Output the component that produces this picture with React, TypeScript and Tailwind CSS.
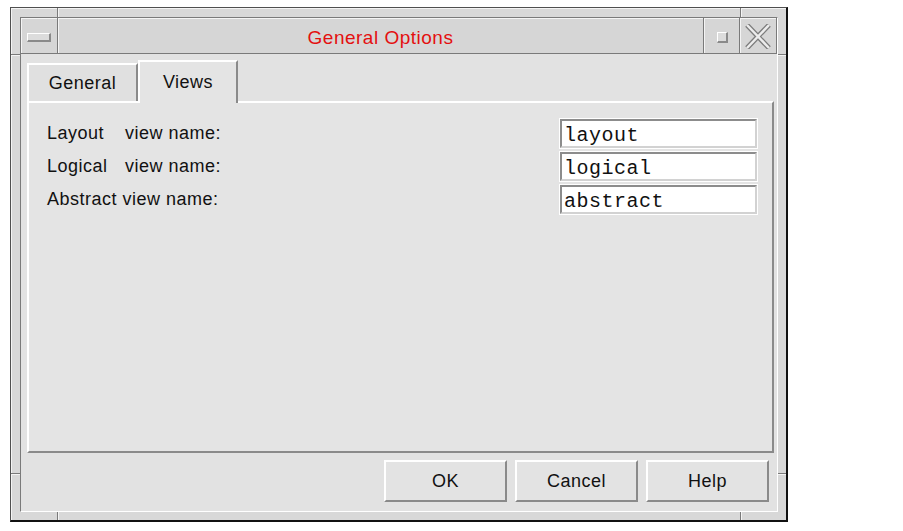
import React from "react";

function Field({ value }: { value: string }) {
  return (
    <div className="h-[31px] w-[199px] border border-white">
      <div className="flex h-full w-full items-center border-t-2 border-l-2 border-b-2 border-r-2 border-t-[#8c8c8c] border-l-[#8c8c8c] border-b-[#d2d2d2] border-r-[#d2d2d2] bg-white pl-[2px] pt-[4px] font-['Liberation_Mono','Courier_New',monospace] text-[20px] leading-none text-[#111]">
        {value}
      </div>
    </div>
  );
}

function Btn({ label }: { label: string }) {
  return (
    <div className="flex h-[42px] w-[123px] items-center justify-center border-t-2 border-l-2 border-b-2 border-r-2 border-t-white border-l-white border-b-[#8a8a8a] border-r-[#8a8a8a] bg-[#e3e3e3] text-[18px] tracking-[0.5px] text-[#111]">
      {label}
    </div>
  );
}

export default function App() {
  return (
    <div className="min-h-[531px] w-full bg-white pl-[10px] pt-[7px] font-['Liberation_Sans',Arial,sans-serif] text-[#111]">
      <div className="relative flex h-[515px] w-[778px] flex-col border-t border-l border-r-2 border-b-2 border-t-[#505050] border-l-[#505050] border-r-[#111] border-b-[#111] bg-[#d8d8d8] pt-[9px] pl-[9px] pr-[8px] pb-[8px] shadow-[inset_1px_1px_0_#f4f4f4]">
        {/* frame notches */}
        <div className="absolute left-[46px] top-0 h-[9px] w-[1px] bg-[#7a7a7a]" />
        <div className="absolute left-[47px] top-0 h-[9px] w-[1px] bg-[#f4f4f4]" />
        <div className="absolute left-[729px] top-0 h-[9px] w-[1px] bg-[#7a7a7a]" />
        <div className="absolute left-[730px] top-0 h-[9px] w-[1px] bg-[#f4f4f4]" />
        <div className="absolute bottom-0 left-[46px] h-[8px] w-[1px] bg-[#7a7a7a]" />
        <div className="absolute bottom-0 left-[47px] h-[8px] w-[1px] bg-[#f4f4f4]" />
        <div className="absolute bottom-0 left-[729px] h-[8px] w-[1px] bg-[#7a7a7a]" />
        <div className="absolute bottom-0 left-[730px] h-[8px] w-[1px] bg-[#f4f4f4]" />
        <div className="absolute left-0 top-[46px] h-[1px] w-[9px] bg-[#7a7a7a]" />
        <div className="absolute left-0 top-[47px] h-[1px] w-[9px] bg-[#f4f4f4]" />
        <div className="absolute left-0 top-[465px] h-[1px] w-[9px] bg-[#7a7a7a]" />
        <div className="absolute left-0 top-[466px] h-[1px] w-[9px] bg-[#f4f4f4]" />
        <div className="absolute right-0 top-[46px] h-[1px] w-[8px] bg-[#7a7a7a]" />
        <div className="absolute right-0 top-[47px] h-[1px] w-[8px] bg-[#f4f4f4]" />
        <div className="absolute right-0 top-[465px] h-[1px] w-[8px] bg-[#7a7a7a]" />
        <div className="absolute right-0 top-[466px] h-[1px] w-[8px] bg-[#f4f4f4]" />

        {/* inner box */}
        <div className="flex flex-1 flex-col border-t border-l border-b border-r border-t-[#7a7a7a] border-l-[#7a7a7a] border-b-white border-r-white">
          {/* title bar */}
          <div className="flex h-[36px] border-b border-b-[#7a7a7a] border-r border-r-[#7a7a7a] bg-[#d6d6d6]">
            <div className="flex w-[37px] items-center justify-center border-r border-r-[#7a7a7a] shadow-[inset_1px_1px_0_#f4f4f4]">
              <div className="mt-[3px] h-[9px] w-[24px] border-t border-l border-b-2 border-r-2 border-t-white border-l-white border-b-[#8a8a8a] border-r-[#8a8a8a] bg-[#dcdcdc]" />
            </div>
            <div className="flex flex-1 items-center justify-center pt-[5px] text-[19px] tracking-[0.5px] text-[#e41010] shadow-[inset_1px_1px_0_#f4f4f4]">
              General Options
            </div>
            <div className="flex w-[36px] items-center justify-center border-l border-l-[#7a7a7a] shadow-[inset_1px_1px_0_#f4f4f4]">
              <div className="ml-[1px] mt-[3px] h-[11px] w-[11px] border-t border-l border-b-2 border-r-2 border-t-white border-l-white border-b-[#8a8a8a] border-r-[#8a8a8a] bg-[#dcdcdc]" />
            </div>
            <div className="flex w-[37px] items-center justify-center border-l border-l-[#7a7a7a] shadow-[inset_1px_1px_0_#f4f4f4]">
              <svg width="26" height="25" viewBox="0 0 26 25" className="mt-[1px]">
                <path d="M2 1 L24 24 M24 1 L2 24" stroke="#7c7c7c" strokeWidth="5" fill="none" />
                <path d="M2 1 L24 24 M24 1 L2 24" stroke="#ececec" strokeWidth="2.5" fill="none" />
              </svg>
            </div>
          </div>

          {/* content */}
          <div className="flex flex-1 flex-col bg-[#e2e2e2] pl-[6px] pt-[6px] pr-[3px] pb-[9px]">
            {/* tabs */}
            <div className="flex h-[41px] items-end">
              <div className="flex h-[38px] w-[111px] items-center justify-center border-t-2 border-l-2 border-r-2 border-t-white border-l-white border-r-[#8a8a8a] bg-[#e0e0e0] pt-[1px] text-[18px] tracking-[0.5px]">
                General
              </div>
              <div className="relative z-10 -mb-[2px] flex h-[43px] w-[100px] items-start justify-center border-t-2 border-l-2 border-r-2 border-t-white border-l-white border-r-[#8a8a8a] bg-[#e4e4e4] pt-[7px] text-[18px] tracking-[0.5px]">
                Views
              </div>
            </div>
            {/* panel */}
            <div className="flex flex-1 flex-col gap-[2px] border-t-2 border-l-2 border-r-2 border-b-2 border-t-white border-l-white border-r-[#8a8a8a] border-b-[#8a8a8a] bg-[#e4e4e4] pl-[18px] pt-[15px] pr-[14px]">
              <div className="flex h-[31px] items-center justify-between text-[18px] tracking-[0.5px]">
                <div>
                  <span className="inline-block w-[78px]">Layout</span>view name:
                </div>
                <Field value="layout" />
              </div>
              <div className="flex h-[31px] items-center justify-between text-[18px] tracking-[0.5px]">
                <div>
                  <span className="inline-block w-[78px]">Logical</span>view name:
                </div>
                <Field value="logical" />
              </div>
              <div className="flex h-[31px] items-center justify-between text-[18px] tracking-[0.5px]">
                <div>Abstract view name:</div>
                <Field value="abstract" />
              </div>
            </div>
            {/* buttons */}
            <div className="mt-[7px] mr-[5px] flex justify-end gap-[8px]">
              <Btn label="OK" />
              <Btn label="Cancel" />
              <Btn label="Help" />
            </div>
          </div>
        </div>
      </div>
    </div>
  );
}
